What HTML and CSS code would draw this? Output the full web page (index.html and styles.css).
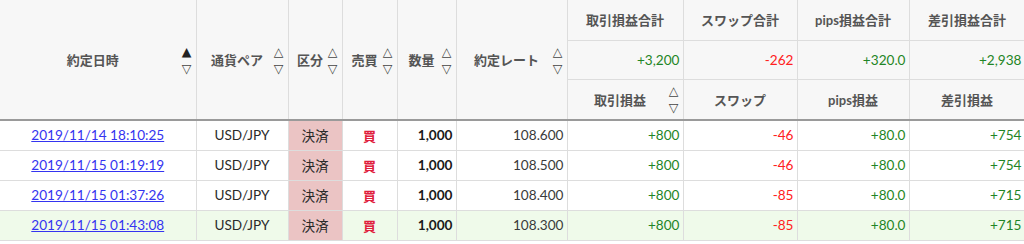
FILE: index.html
```html
<!DOCTYPE html>
<html lang="ja">
<head>
<meta charset="utf-8">
<title>約定履歴</title>
<link rel="stylesheet" href="styles.css">
</head>
<body>
<div class="wrap">
<table class="trades">
  <colgroup>
    <col class="w-date"><col class="w-pair"><col class="w-kind"><col class="w-side"><col class="w-qty"><col class="w-rate">
    <col class="w-pl"><col class="w-swap"><col class="w-pips"><col class="w-net">
  </colgroup>
  <thead>
    <tr class="h1">
      <th rowspan="3" class="first"><div class="th-in"><span class="lbl">約定日時</span><span class="sort"><span class="on">▲</span><span>▽</span></span></div></th>
      <th rowspan="3"><div class="th-in"><span class="lbl">通貨ペア</span><span class="sort"><span>△</span><span>▽</span></span></div></th>
      <th rowspan="3"><div class="th-in"><span class="lbl">区分</span><span class="sort"><span>△</span><span>▽</span></span></div></th>
      <th rowspan="3"><div class="th-in"><span class="lbl">売買</span><span class="sort"><span>△</span><span>▽</span></span></div></th>
      <th rowspan="3"><div class="th-in"><span class="lbl">数量</span><span class="sort"><span>△</span><span>▽</span></span></div></th>
      <th rowspan="3"><div class="th-in"><span class="lbl">約定レート</span><span class="sort"><span>△</span><span>▽</span></span></div></th>
      <th class="sum">取引損益合計</th>
      <th class="sum">スワップ合計</th>
      <th class="sum">pips損益合計</th>
      <th class="sum">差引損益合計</th>
    </tr>
    <tr class="h2">
      <th class="total pos">+3,200</th>
      <th class="total neg">-262</th>
      <th class="total pos">+320.0</th>
      <th class="total pos">+2,938</th>
    </tr>
    <tr class="h3">
      <th><div class="th-in"><span class="lbl">取引損益</span><span class="sort"><span>△</span><span>▽</span></span></div></th>
      <th class="sub">スワップ</th>
      <th class="sub">pips損益</th>
      <th class="sub">差引損益</th>
    </tr>
  </thead>
  <tbody>
    <tr>
      <td class="first date"><a href="#">2019/11/14 18:10:25</a></td>
      <td class="c">USD/JPY</td>
      <td class="c kind">決済</td>
      <td class="c side">買</td>
      <td class="r qty">1,000</td>
      <td class="r rate">108.600</td>
      <td class="r pos">+800</td>
      <td class="r neg">-46</td>
      <td class="r pos">+80.0</td>
      <td class="r pos">+754</td>
    </tr>
    <tr>
      <td class="first date"><a href="#">2019/11/15 01:19:19</a></td>
      <td class="c">USD/JPY</td>
      <td class="c kind">決済</td>
      <td class="c side">買</td>
      <td class="r qty">1,000</td>
      <td class="r rate">108.500</td>
      <td class="r pos">+800</td>
      <td class="r neg">-46</td>
      <td class="r pos">+80.0</td>
      <td class="r pos">+754</td>
    </tr>
    <tr>
      <td class="first date"><a href="#">2019/11/15 01:37:26</a></td>
      <td class="c">USD/JPY</td>
      <td class="c kind">決済</td>
      <td class="c side">買</td>
      <td class="r qty">1,000</td>
      <td class="r rate">108.400</td>
      <td class="r pos">+800</td>
      <td class="r neg">-85</td>
      <td class="r pos">+80.0</td>
      <td class="r pos">+715</td>
    </tr>
    <tr class="hl">
      <td class="first date"><a href="#">2019/11/15 01:43:08</a></td>
      <td class="c">USD/JPY</td>
      <td class="c kind">決済</td>
      <td class="c side">買</td>
      <td class="r qty">1,000</td>
      <td class="r rate">108.300</td>
      <td class="r pos">+800</td>
      <td class="r neg">-85</td>
      <td class="r pos">+80.0</td>
      <td class="r pos">+715</td>
    </tr>
  </tbody>
</table>
</div>
</body>
</html>
```

FILE: styles.css
```css
html, body {
  margin: 0;
  padding: 0;
  background: #fff;
  overflow: hidden;
}
body {
  font-family: Lato, "Noto Sans CJK JP", sans-serif;
}
.wrap {
  width: 1024px;
  overflow: hidden;
}
.trades {
  border-collapse: collapse;
  table-layout: fixed;
  width: 1025px;
  font-size: 13.6px;
  color: #2a2a2a;
}
.w-date { width: 196px; }
.w-pair { width: 92px; }
.w-kind { width: 54px; }
.w-side { width: 55px; }
.w-qty { width: 59px; }
.w-rate { width: 111px; }
.w-pl { width: 116px; }
.w-swap { width: 114px; }
.w-pips { width: 112px; }
.w-net { width: 116px; }

.trades th,
.trades td {
  border: 1px solid #ddd;
  padding: 0 3px;
  white-space: nowrap;
}
.trades .first {
  border-left: none;
}
.trades .h1 th {
  border-top: none;
}
.trades th {
  background: #f7f7f7;
  color: #555;
  font-weight: bold;
  font-size: 13px;
  text-align: center;
  vertical-align: middle;
}
.h1 { height: 40px; }
.h2 { height: 39px; }
.h3 { height: 41px; }

.th-in {
  display: flex;
  align-items: center;
  padding: 0 1px 0 1px;
}
.lbl {
  flex: 1;
  text-align: center;
}
.sort {
  display: flex;
  flex-direction: column;
  width: 10px;
  font-family: "DejaVu Sans", sans-serif;
  font-size: 12.5px;
  line-height: 17px;
  color: #444;
  font-weight: normal;
  text-align: center;
}
.sort .on {
  color: #222;
}

.trades th.total {
  text-align: right;
  font-weight: normal;
  font-size: 13.6px;
}

.trades tbody tr {
  height: 30px;
}
.trades tbody tr:first-child td {
  border-top: 2px solid #9a9a9a;
}
.trades tbody tr.hl td {
  background: #effaea;
}
.trades td.c { text-align: center; }
.trades td.r { text-align: right; }
.trades td.date { text-align: center; }
.date a {
  color: #3434f0;
  text-decoration: underline;
}
.trades td.kind,
.trades tr.hl td.kind {
  background: #ebc4c4;
}
.side {
  color: #e0203c;
  font-weight: bold;
  font-size: 13px;
}
.qty {
  font-weight: bold;
  color: #1a1a1a;
}
.rate {
  color: #3a3a3a;
}
.trades .pos { color: #1f8526; }
.trades .neg { color: #ff2020; }
```
